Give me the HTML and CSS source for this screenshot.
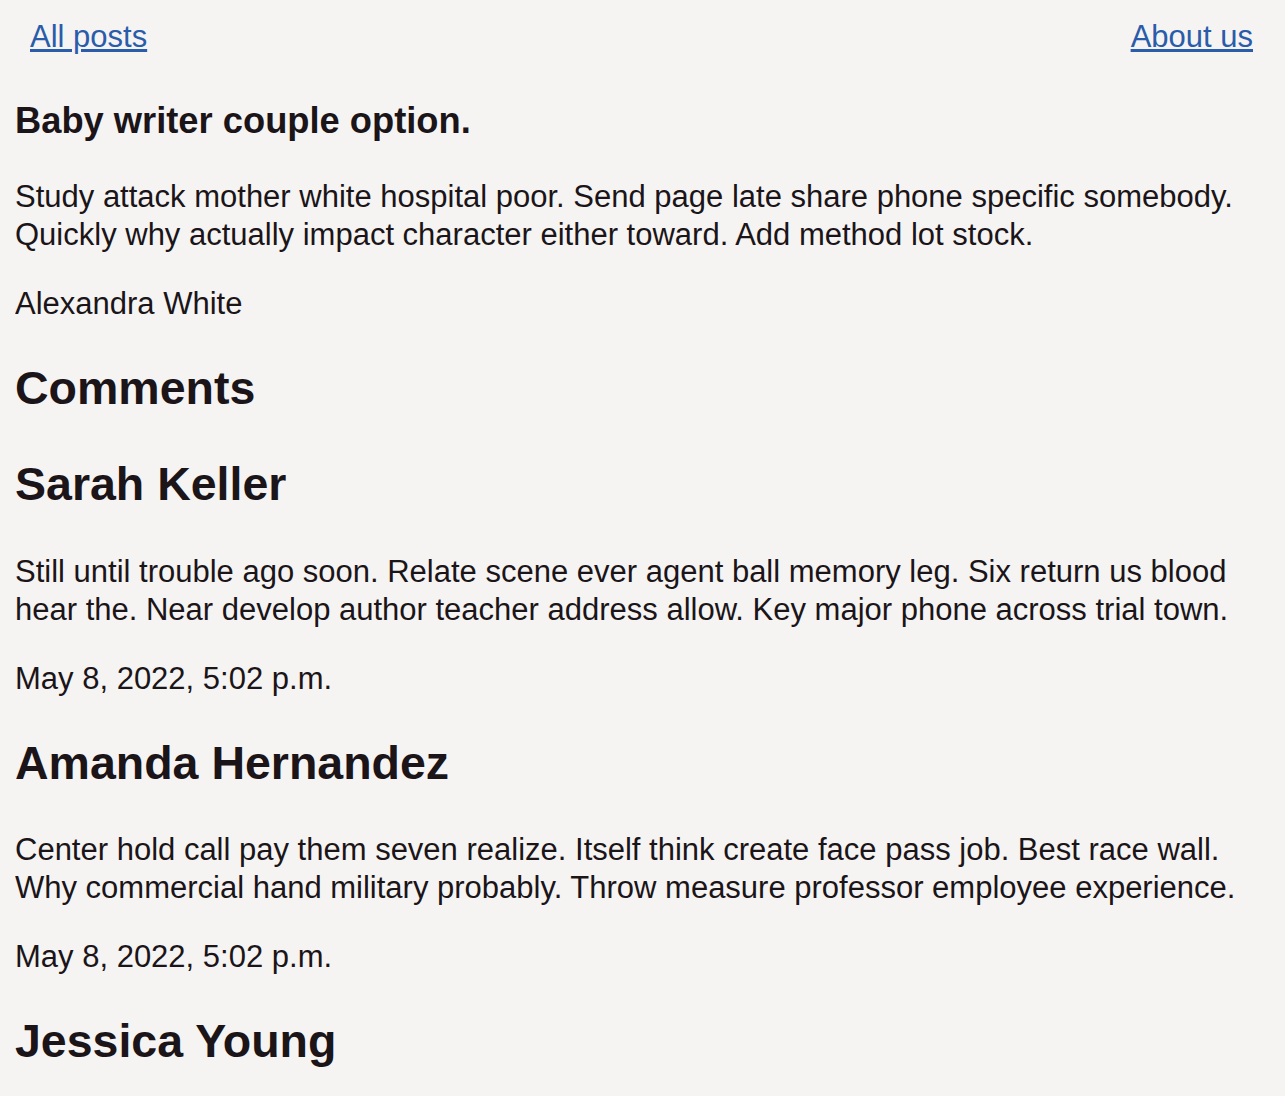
FILE: index.html
```html
<!DOCTYPE html>
<html lang="en">
<head>
<meta charset="utf-8">
<title>Baby writer couple option.</title>
<link rel="stylesheet" href="styles.css">
</head>
<body>
<nav class="nav">
  <a class="nav-link" href="#">All posts</a>
  <a class="nav-link" href="#">About us</a>
</nav>
<main class="post">
  <h3 class="post-title">Baby writer couple option.</h3>
  <p class="text">Study attack mother white hospital poor. Send page late share phone specific somebody. Quickly why actually impact character either toward. Add method lot stock.</p>
  <p class="text">Alexandra White</p>
  <h2 class="section-title">Comments</h2>
  <section class="comment">
    <h2 class="comment-author">Sarah Keller</h2>
    <p class="text">Still until trouble ago soon. Relate scene ever agent ball memory leg. Six return us blood hear the. Near develop author teacher address allow. Key major phone across trial town.</p>
    <p class="text">May 8, 2022, 5:02 p.m.</p>
  </section>
  <section class="comment">
    <h2 class="comment-author">Amanda Hernandez</h2>
    <p class="text">Center hold call pay them seven realize. Itself think create face pass job. Best race wall. Why commercial hand military probably. Throw measure professor employee experience.</p>
    <p class="text">May 8, 2022, 5:02 p.m.</p>
  </section>
  <section class="comment">
    <h2 class="comment-author">Jessica Young</h2>
  </section>
</main>
</body>
</html>
```

FILE: styles.css
```css
html {
  background: #f5f4f2;
}

body {
  margin: 15px;
  font-family: "Liberation Sans", Arial, Helvetica, sans-serif;
  font-size: 31px;
  line-height: 1.23;
  color: #1b1519;
  background: #f5f4f2;
}

.nav {
  display: flex;
  justify-content: space-between;
  padding: 3px 0 6px;
}

.nav-link {
  color: #2a5caa;
  text-decoration: underline;
  padding: 0 17px 0 15px;
}

.post-title {
  font-size: 36.3px;
  font-weight: bold;
  margin: 37px 0 34px;
}

.text {
  margin: 31px 0;
}

.section-title,
.comment-author {
  font-size: 46.5px;
  font-weight: bold;
  margin: 37px 0 39px;
}
```
